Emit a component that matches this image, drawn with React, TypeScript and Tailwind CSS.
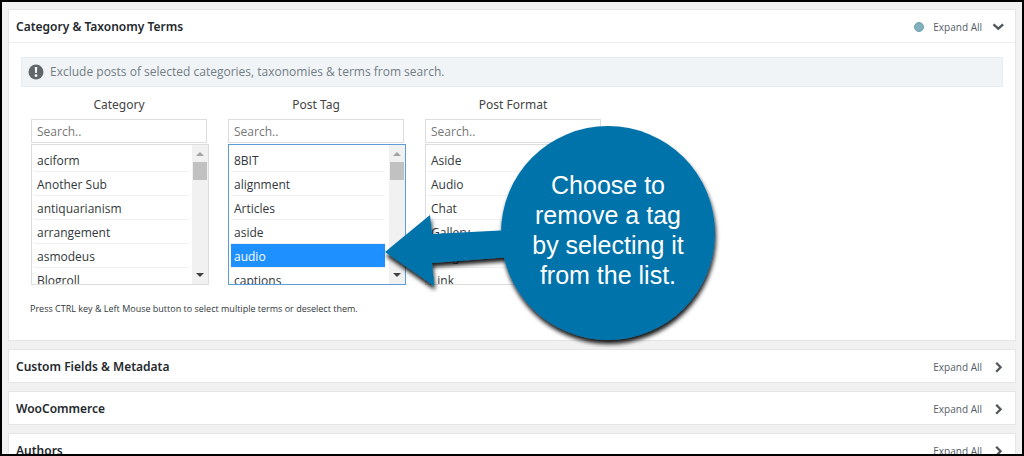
import { clsx } from 'clsx';

interface TermListProps {
  id: string;
  title: string;
  terms: string[];
  selected?: string[];
  active?: boolean;
}

interface PanelHeaderProps {
  title: string;
  open?: boolean;
}

const categories = ['aciform', 'Another Sub', 'antiquarianism', 'arrangement', 'asmodeus', 'Blogroll'];
const tags = ['8BIT', 'alignment', 'Articles', 'aside', 'audio', 'captions'];
const formats = ['Aside', 'Audio', 'Chat', 'Gallery', 'Image', 'Link'];
const closedPanels = ['Custom Fields & Metadata', 'WooCommerce', 'Authors'];

function Chevron({ open }: { open?: boolean }) {
  return (
    <svg width="12" height="12" viewBox="0 0 12 12" fill="none" stroke="#50565b" strokeWidth="2.3">
      <path d={open ? 'M1.5 3.3 L6.3 7.7 L11.1 3.3' : 'M4.2 1.7 L8.6 6.2 L4.2 10.7'} />
    </svg>
  );
}

function PanelHeader({ title, open }: PanelHeaderProps) {
  return (
    <div className="flex h-8 items-center justify-between pt-[2px] pr-[11px] pl-[7px]">
      <h2 className="font-['Noto_Sans',sans-serif] text-[12px] font-semibold text-[#23282d]">{title}</h2>
      <div className="flex items-center gap-[9px]">
        {open && <span className="size-[10px] rounded-full border border-[#6f9fae] bg-[#82b0bc]" />}
        <button className="flex items-center gap-[10px] text-[10px] font-medium text-[#555d66]" aria-expanded={!!open}>
          Expand All
          <Chevron open={open} />
        </button>
      </div>
    </div>
  );
}

function ScrollTrack() {
  return (
    <div className="flex w-4 shrink-0 flex-col items-center bg-[#f1f1f1] py-[7px]" aria-hidden="true">
      <svg width="8" height="4" viewBox="0 0 8 4">
        <path d="M0 4 L4 0 L8 4 Z" fill="#a3a3a3" />
      </svg>
      <div className="mt-[6px] h-[18px] w-[14px] bg-[#c1c1c1]" />
      <svg className="mt-auto" width="8" height="4" viewBox="0 0 8 4">
        <path d="M0 0 L4 4 L8 0 Z" fill="#404040" />
      </svg>
    </div>
  );
}

function TermList({ id, title, terms, selected = [], active }: TermListProps) {
  return (
    <div className="w-[178px]">
      <label
        htmlFor={id}
        className="mr-[2px] block text-center font-['Noto_Sans',sans-serif] text-[12px] leading-5 text-[#444]"
      >
        {title}
      </label>
      <input
        type="text"
        placeholder="Search.."
        aria-label={`Search ${title}`}
        className="mt-1 block h-6 w-[176px] border border-[#ddd] bg-white px-[5px] text-[12px] text-[#444] placeholder:text-[#777]"
      />
      <div
        className={clsx(
          'mt-px flex h-[141px] border bg-white',
          active ? 'border-[#5b9dd9]' : 'border-[#ddd]',
        )}
      >
        <select
          id={id}
          multiple
          defaultValue={selected}
          className="min-w-0 flex-1 overflow-hidden pt-[3px] pr-1 pb-0 pl-[2px] text-[12px] text-[#32373c] outline-none [scrollbar-width:none]"
        >
          {terms.map((term) => (
            <option
              key={term}
              value={term}
              className="h-6 min-h-6 border-b border-[#f0f0f0] px-[3px] pt-1 pb-0 checked:bg-linear-to-r checked:from-[#1e90ff] checked:to-[#1e90ff] checked:[-webkit-text-fill-color:white]"
            >
              {term}
            </option>
          ))}
        </select>
        <ScrollTrack />
      </div>
    </div>
  );
}

function Callout() {
  return (
    <div className="pointer-events-none absolute top-[118px] left-[378px] h-[230px] w-[344px]">
      <svg className="absolute inset-0 overflow-visible" width="344" height="230" viewBox="380 120 344 230">
        <defs>
          <filter id="shadow" x="-10%" y="-10%" width="120%" height="125%">
            <feDropShadow dx="1" dy="4" stdDeviation="2" floodColor="#000" floodOpacity="0.9" />
          </filter>
        </defs>
        <g fill="#0073aa" filter="url(#shadow)">
          <path d="M385 252 L430 215 L432 234 L510 230 L510 257 L432 263 L434 286 Z" />
          <circle cx="608" cy="233" r="107" />
        </g>
      </svg>
      <p className="absolute top-[50px] right-[9px] w-[214px] text-center font-['Liberation_Sans',Arial,sans-serif] text-[25px] leading-[30px] text-white">
        Choose to
        <br />
        remove a tag
        <br />
        by selecting it
        <br />
        from the list.
      </p>
    </div>
  );
}

export default function App() {
  return (
    <div className="relative h-screen overflow-hidden border-2 border-black bg-[#f1f1f1] font-['Open_Sans','Noto_Sans',sans-serif]">
      <main className="flex flex-col gap-2 px-[6px] pt-[7px]">
        {/* Category & Taxonomy Terms */}
        <section className="border border-[#e5e5e5] bg-white">
          <PanelHeader title="Category & Taxonomy Terms" open />
          <div className="border-t border-[#eee] px-3 pt-[14px] pb-[23px]">
            <div className="flex h-[30px] items-center gap-[6px] border border-[#e3edf2] bg-[#f0f4f7] px-[6px] text-[12px] text-[#737d85]">
              <svg width="16" height="16" viewBox="0 0 16 16">
                <circle cx="8" cy="8" r="7.5" fill="#5f666c" />
                <path d="M6.7 3 h2.6 l-0.5 6 h-1.6 Z" fill="#fff" />
                <circle cx="8" cy="11.6" r="1.4" fill="#fff" />
              </svg>
              <p>Exclude posts of selected categories, taxonomies &amp; terms from search.</p>
            </div>
            <div className="mt-2 flex gap-[19px] pl-[10px]">
              <TermList id="category" title="Category" terms={categories} />
              <TermList id="post-tag" title="Post Tag" terms={tags} selected={['audio']} active />
              <TermList id="post-format" title="Post Format" terms={formats} />
            </div>
            <p className="mt-4 pl-[9px] text-[9px] leading-4 text-[#32373c]">
              Press CTRL key &amp; Left Mouse button to select multiple terms or deselect them.
            </p>
          </div>
        </section>

        {closedPanels.map((title) => (
          <section key={title} className="border border-[#e5e5e5] bg-white">
            <PanelHeader title={title} />
          </section>
        ))}
      </main>
      <Callout />
    </div>
  );
}
